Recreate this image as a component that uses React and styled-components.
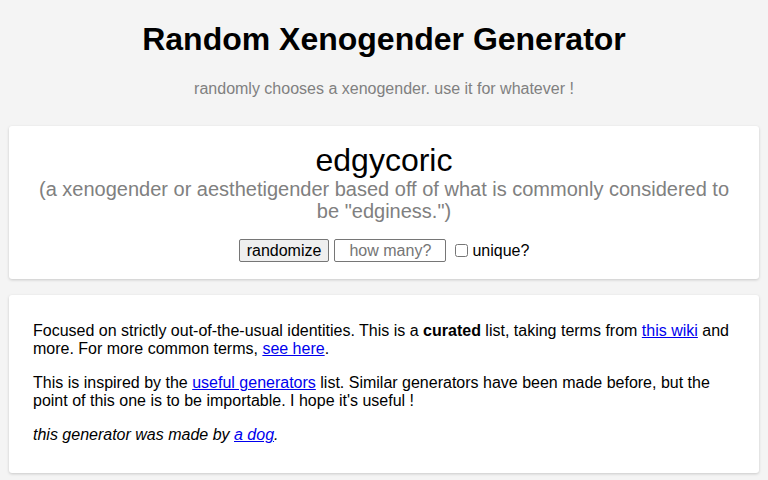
import styled, { createGlobalStyle } from 'styled-components';

const GlobalStyle = createGlobalStyle`
  html, body {
    margin: 0;
    padding: 0;
    background: #f4f4f4;
    font-family: "Liberation Sans", Arial, sans-serif;
    color: #000;
  }
`;

const Page = styled.div`
  padding: 0 9px;
`;

const Header = styled.header`
  display: flex;
  flex-direction: column;
  align-items: center;
  padding-top: 21px;
  margin-bottom: 28px;

  > h1 {
    margin: 0;
    font-size: 32px;
    font-weight: bold;
    line-height: 37px;
  }

  > p {
    margin: 22px 0 0;
    font-size: 16px;
    line-height: 18px;
    color: #808080;
  }
`;

const Card = styled.section`
  background: #fff;
  border-radius: 3px;
  box-shadow: 0 1px 3px rgba(0, 0, 0, 0.18);
  padding: ${(p) => p.$pad};
  margin-bottom: 16px;
`;

const ResultBox = styled.div`
  display: flex;
  flex-direction: column;
  align-items: center;
  text-align: center;
`;

const Term = styled.div`
  font-size: 32px;
  line-height: 36px;
`;

const Definition = styled.div`
  font-size: 20px;
  line-height: 22px;
  color: #808080;
`;

const Controls = styled.div`
  display: flex;
  align-items: center;
  justify-content: center;
  margin-top: 17px;
  height: 23px;
  font-size: 16px;
`;

const Button = styled.button`
  font-family: inherit;
  font-size: 16px;
  height: 23px;
  padding: 0 7px;
  background: #efefef;
  border: 1px solid #767676;
  border-radius: 2px;
  color: #000;
`;

const CountInput = styled.input`
  font-family: inherit;
  font-size: 16px;
  width: 112px;
  height: 23px;
  box-sizing: border-box;
  margin-left: 5px;
  border: 1px solid #767676;
  border-radius: 2px;
  text-align: center;
  padding: 0;
  ::placeholder {
    color: #9a9a9a;
  }
`;

const Check = styled.label`
  display: flex;
  align-items: center;
  margin-left: 9px;

  > input {
    margin: 0 4px 0 0;
    width: 13px;
    height: 13px;
  }
`;

const About = styled.div`
  font-size: 16px;
  line-height: 18px;

  > p {
    margin: 16px 0;
  }

  a {
    color: #0000ee;
  }
`;

export default function App() {
  return (
    <Page>
      <GlobalStyle />
      <Header>
        <h1>Random Xenogender Generator</h1>
        <p>randomly chooses a xenogender. use it for whatever !</p>
      </Header>
      <Card $pad="16px 24px 17px">
        <ResultBox>
          <Term>edgycoric</Term>
          <Definition>
            (a xenogender or aesthetigender based off of what is commonly considered to be "edginess.")
          </Definition>
        </ResultBox>
        <Controls>
          <Button>randomize</Button>
          <CountInput placeholder="how many?" />
          <Check>
            <input type="checkbox" />
            unique?
          </Check>
        </Controls>
      </Card>
      <Card $pad="11px 24px 13px">
        <About>
          <p>
            Focused on strictly out-of-the-usual identities. This is a <b>curated</b> list, taking terms
            from <a href="#">this wiki</a> and more. For more common terms, <a href="#">see here</a>.
          </p>
          <p>
            This is inspired by the <a href="#">useful generators</a> list. Similar generators have been
            made before, but the point of this one is to be importable. I hope it's useful !
          </p>
          <p>
            <i>
              this generator was made by <a href="#">a dog</a>.
            </i>
          </p>
        </About>
      </Card>
    </Page>
  );
}
